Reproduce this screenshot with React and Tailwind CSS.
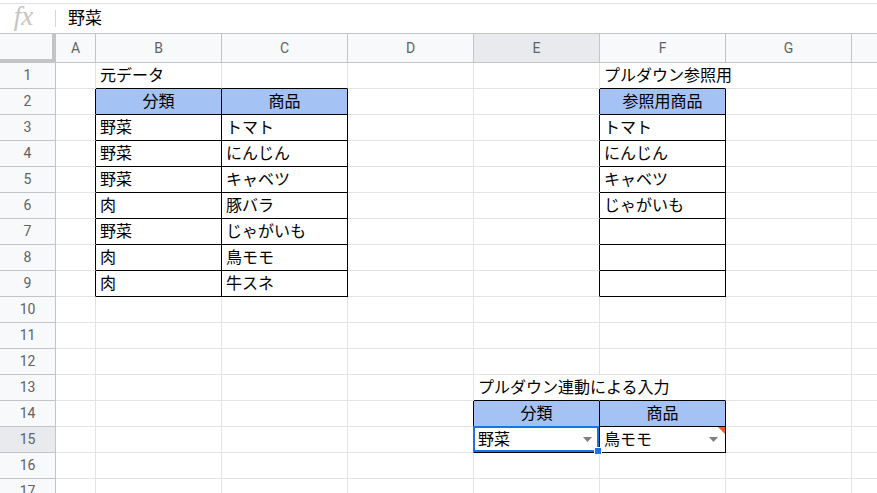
import React from 'react';

const COLS = ['A', 'B', 'C', 'D', 'E', 'F', 'G', 'H'];
const ROWS = Array.from({ length: 17 }, (_, i) => i + 1);

// [row1, row2, col1, col2] with A = 1
const BOXES = [
    [2, 9, 2, 3],
    [2, 9, 6, 6],
    [14, 15, 5, 6],
];

const CELLS = {
    B1: { text: '元データ' },
    B2: { text: '分類', head: true },
    C2: { text: '商品', head: true },
    B3: { text: '野菜' }, C3: { text: 'トマト' },
    B4: { text: '野菜' }, C4: { text: 'にんじん' },
    B5: { text: '野菜' }, C5: { text: 'キャベツ' },
    B6: { text: '肉' }, C6: { text: '豚バラ' },
    B7: { text: '野菜' }, C7: { text: 'じゃがいも' },
    B8: { text: '肉' }, C8: { text: '鳥モモ' },
    B9: { text: '肉' }, C9: { text: '牛スネ' },
    F1: { text: 'プルダウン参照用', overflow: true },
    F2: { text: '参照用商品', head: true },
    F3: { text: 'トマト' },
    F4: { text: 'にんじん' },
    F5: { text: 'キャベツ' },
    F6: { text: 'じゃがいも' },
    E13: { text: 'プルダウン連動による入力', overflow: true },
    E14: { text: '分類', head: true },
    F14: { text: '商品', head: true },
    E15: { text: '野菜', dropdown: true, selected: true },
    F15: { text: '鳥モモ', dropdown: true, flag: true },
};

const inBox = (r, c) => BOXES.some(([r1, r2, c1, c2]) => r >= r1 && r <= r2 && c >= c1 && c <= c2);

const Arrow = () => (
    <svg width="9" height="5" viewBox="0 0 9 5" className="shrink-0">
        <polygon points="0,0 9,0 4.5,5" fill="#808080" />
    </svg>
);

const Cell = ({ r, c }) => {
    const key = COLS[c - 1] + r;
    const cell = CELLS[key];

    let right = 'border-r-[#e2e3e3]';
    if (inBox(r, c) || inBox(r, c + 1)) right = 'border-r-black';
    else if (cell?.overflow) right = 'border-r-transparent';
    const bottom = inBox(r, c) || inBox(r + 1, c) ? 'border-b-black' : 'border-b-[#e2e3e3]';

    return (
        <div className={`relative h-[26px] border-r border-b ${right} ${bottom} ${cell?.head ? 'bg-[#a4c2f4] justify-center' : ''} flex items-center text-[16px] text-black`}>
            {cell && (
                <>
                    <span className={`whitespace-nowrap z-10 ${cell.head ? '' : 'pl-[4px]'}`}>{cell.text}</span>
                    {cell.dropdown && (
                        <span className="ml-auto mr-[7px] flex items-center">
                            <Arrow />
                        </span>
                    )}
                    {cell.flag && (
                        <svg width="7" height="7" viewBox="0 0 7 7" className="absolute top-0 right-0">
                            <polygon points="0,0 7,0 7,7" fill="#f4582a" />
                        </svg>
                    )}
                    {cell.selected && (
                        <>
                            <div className="absolute -left-[1px] -top-[1px] right-0 bottom-0 border-2 border-[#1a73e8] z-20" />
                            <div className="absolute -right-[3px] -bottom-[3px] w-[8px] h-[8px] bg-[#1a73e8] border border-white z-30" />
                        </>
                    )}
                </>
            )}
        </div>
    );
};

export default function App() {
    return (
        <div className="w-[877px] h-[493px] overflow-hidden bg-white font-[Liberation_Sans,Noto_Sans_CJK_JP,sans-serif]">
            {/* formula bar */}
            <div className="h-[3px] bg-white" />
            <div className="h-[31px] border-t border-b border-t-[#e0e0e0] border-b-[#c4c4c4] flex items-center">
                <div className="w-[55px] flex items-center justify-center">
                    <span className="font-[Liberation_Serif,serif] italic text-[27px] leading-none text-[#c4c4c4] -mt-[4px] -ml-[8px]">fx</span>
                </div>
                <div className="w-px h-[17px] bg-[#d6d6d6]" />
                <span className="ml-[12px] text-[17px] text-black">野菜</span>
            </div>

            <div className="grid grid-cols-[56px_40px_126px_126px_126px_126px_126px_126px_126px]">
                {/* column headers */}
                <div className="h-[29px] border-r-4 border-b-4 border-[#c4c4c4] bg-[#f8f9fa]" />
                {COLS.map((col) => (
                    <div
                        key={col}
                        className={`h-[29px] border-r border-b border-[#c4c4c4] flex items-center justify-center text-[14px] text-[#5f6368] font-[Roboto,sans-serif] ${col === 'E' ? 'bg-[#e8eaed]' : 'bg-[#f8f9fa]'}`}
                    >
                        {col}
                    </div>
                ))}

                {ROWS.map((r) => (
                    <React.Fragment key={r}>
                        <div
                            className={`h-[26px] border-r border-b border-[#c4c4c4] flex items-center justify-center text-[14px] text-[#5f6368] font-[Roboto,sans-serif] ${r === 15 ? 'bg-[#e8eaed]' : 'bg-[#f8f9fa]'}`}
                        >
                            {r}
                        </div>
                        {COLS.map((_, i) => (
                            <Cell key={i} r={r} c={i + 1} />
                        ))}
                    </React.Fragment>
                ))}
            </div>
        </div>
    );
}
